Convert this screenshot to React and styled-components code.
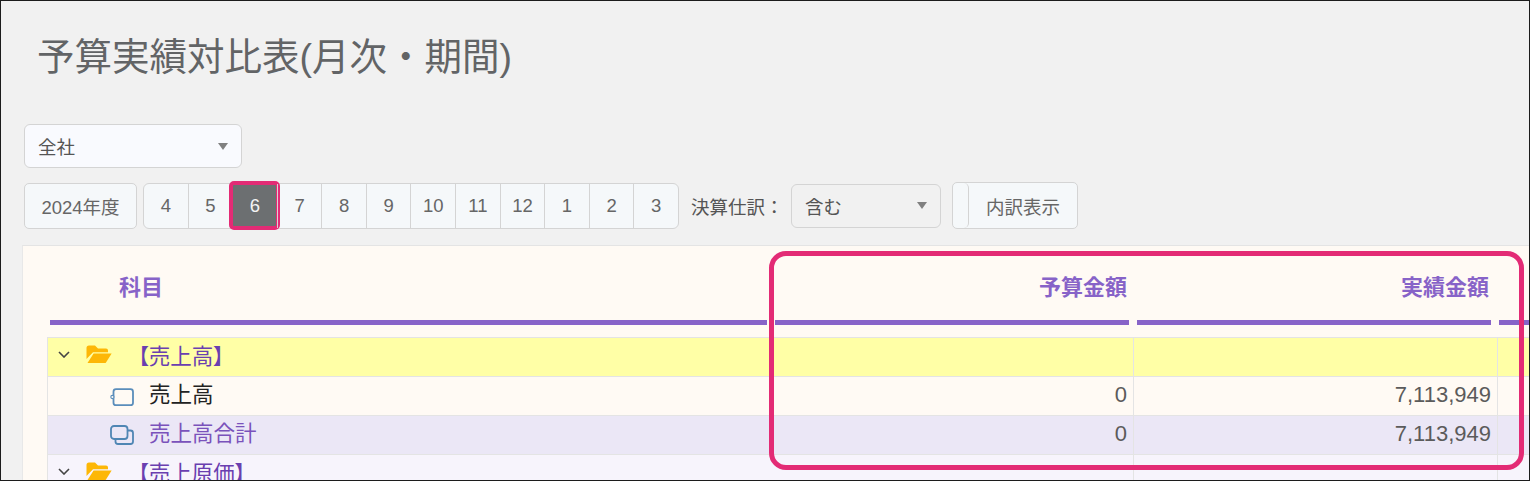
import React from "react";
import styled, { createGlobalStyle } from "styled-components";

const FONT = `"Liberation Sans", "Noto Sans CJK JP", sans-serif`;
const MONTHS = [4, 5, 6, 7, 8, 9, 10, 11, 12, 1, 2, 3];

const GlobalStyle = createGlobalStyle`
  html, body {
    margin: 0;
    padding: 0;
    background: #f1f1f1;
  }
`;

const Page = styled.div`
  position: relative;
  box-sizing: border-box;
  width: 1530px;
  height: 481px;
  overflow: hidden;
  border: 1px solid #1c1c1c;
  background: #f1f1f1;
  padding: 0 0 0 21px;
  font-family: ${FONT};
  color: #555;
`;

const Title = styled.h1`
  margin: 0;
  padding: 34px 0 0 15px;
  height: 123px;
  box-sizing: border-box;
  font-size: 37.5px;
  line-height: 44px;
  font-weight: 400;
  color: #626466;
`;

const CompanySelect = styled.div`
  box-sizing: border-box;
  display: flex;
  align-items: center;
  justify-content: space-between;
  width: 218px;
  height: 44px;
  margin-left: 2px;
  padding: 0 13px;
  border: 1px solid #d4d4d4;
  border-radius: 6px;
  background: #f9fafe;
  font-size: 18.5px;
  color: #555;
`;

const ClosingSelect = styled(CompanySelect)`
  width: 150px;
  margin-left: 0;
  background: #f1f1f1;
`;

const Caret = styled.span`
  width: 0;
  height: 0;
  border-left: 5.5px solid transparent;
  border-right: 5.5px solid transparent;
  border-top: 7px solid #808080;
`;

const Controls = styled.div`
  display: flex;
  align-items: center;
  margin: 14px 0 16px 2px;
  height: 47px;
`;

const Plain = styled.div`
  box-sizing: border-box;
  display: flex;
  align-items: center;
  justify-content: center;
  width: 113px;
  height: 46px;
  margin-right: 6px;
  border: 1px solid #d4d4d4;
  border-radius: 5px;
  background: #f5f8fa;
  font-size: 18.5px;
  color: #666;
`;

const Months = styled.div`
  box-sizing: border-box;
  display: flex;
  width: 536px;
  height: 46px;
  border: 1px solid #d4d4d4;
  border-radius: 6px;
  background: #f5f8fa;
`;

const Month = styled.div`
  position: relative;
  flex: 1;
  display: flex;
  align-items: center;
  justify-content: center;
  font-size: 18.5px;
  color: ${(p) => (p.$active ? "#f4f4f4" : "#666")};
  background: ${(p) => (p.$active ? "#6c6f71" : "transparent")};
  border-left: ${(p) => (p.$first ? "0" : "1px solid #d4d4d4")};

  ${(p) =>
    p.$active &&
    `&::after {
      content: "";
      position: absolute;
      top: -3px;
      bottom: -2px;
      left: -4px;
      right: -3px;
      border: 4px solid #e32b75;
      border-radius: 5px;
    }`}
`;

const FieldLabel = styled.span`
  box-sizing: border-box;
  width: 112px;
  padding-left: 12px;
  font-size: 18.5px;
  white-space: nowrap;
  color: #555;
`;

const Split = styled.div`
  box-sizing: border-box;
  display: flex;
  width: 126px;
  height: 47px;
  margin-left: 11px;
  border: 1px solid #d4d4d4;
  border-radius: 5px;
  background: #f5f8fa;
`;

const SplitEdge = styled.div`
  width: 15px;
  border-right: 1px solid #d4d4d4;
  border-radius: 0 5px 5px 0;
`;

const SplitLabel = styled.div`
  flex: 1;
  display: flex;
  align-items: center;
  justify-content: center;
  font-size: 18.5px;
  color: #666;
`;

const Panel = styled.div`
  width: 1520px;
  height: 300px;
  border-top: 1px solid #e4e4e4;
  border-left: 1px solid #e8e8e8;
  background: #fffaf4;
  padding-left: 24px;
`;

const HeadRow = styled.div`
  display: grid;
  grid-template-columns: 717px 354px 354px 354px;
  column-gap: 8px;
  margin-left: 3px;
  height: 79px;
`;

const HeadCell = styled.div`
  box-sizing: border-box;
  height: 79px;
  border-bottom: 5px solid #8763c8;
  padding: 28px ${(p) => (p.$right ? "2px" : "0")} 0 ${(p) => (p.$right ? "0" : "69px")};
  text-align: ${(p) => (p.$right ? "right" : "left")};
  font-size: 22px;
  line-height: 28px;
  font-weight: 700;
  color: #8763c8;
`;

const Body = styled.div`
  margin-top: 12px;
  border-top: 1px solid #e4e4e4;
  border-left: 1px solid #e4e4e4;
  width: 1500px;
`;

const Row = styled.div`
  display: grid;
  grid-template-columns: 724px 362px 364px 362px;
  height: 39px;
  box-sizing: border-box;
  border-bottom: 1px solid #e4e4e4;
  background: ${(p) => p.$bg};
`;

const NameCell = styled.div`
  display: flex;
  align-items: center;
  padding-left: 62px;
  padding-bottom: 7px;
  font-size: 21.5px;
  white-space: nowrap;
  color: ${(p) => p.$color};
`;

const GroupCell = styled(NameCell)`
  padding-left: 10px;
  padding-bottom: 5px;
  font-feature-settings: "palt";
`;

const Amount = styled.div`
  box-sizing: border-box;
  display: flex;
  align-items: center;
  justify-content: flex-end;
  padding-right: 6px;
  padding-bottom: 3px;
  border-right: 1px solid ${(p) => (p.$noLine ? "transparent" : "#e4e4e4")};
  font-size: 22px;
  color: #5b5b5b;
`;

const Chevron = styled.svg`
  width: 12px;
  height: 7px;
  margin-right: 16px;
`;

const Folder = styled.svg`
  width: 26px;
  height: 19px;
  margin-right: 26px;
`;

const LeafIcon = styled.svg`
  width: 24px;
  height: 22px;
  margin: 9px 15px 0 0;
`;

const Frame = styled.div`
  position: absolute;
  left: 768px;
  top: 250px;
  width: 755px;
  height: 219px;
  box-sizing: border-box;
  border: 5px solid #e32b75;
  border-radius: 17px;
`;

const Arrow = () => (
  <Chevron viewBox="0 0 12 7">
    <path d="M1 1l5 5 5-5" fill="none" stroke="#444" strokeWidth="1.6" />
  </Chevron>
);

const FolderOpen = () => (
  <Folder viewBox="0 0 26 19">
    <path d="M.5 3A2.5 2.5 0 0 1 3 .5h6l3 3h8a2 2 0 0 1 2 2v1.7H7L.5 14z" fill="#fdb706" />
    <path d="M7.6 8.6h18L20 17.4a1.5 1.5 0 0 1-1 .6H1.5z" fill="#fdb706" />
  </Folder>
);

const SingleIcon = () => (
  <LeafIcon viewBox="0 0 24 22">
    <rect x="3.5" y="3.2" width="19.5" height="16" rx="2.5" fill="none" stroke="#5a8dbb" strokeWidth="1.8" />
    <circle cx="2.4" cy="11" r="1.6" fill="#fffaf4" stroke="#5a8dbb" strokeWidth="1.1" />
  </LeafIcon>
);

const DoubleIcon = () => (
  <LeafIcon viewBox="0 0 24 22">
    <rect x="5.5" y="5.5" width="17.5" height="13.5" rx="2.5" fill="none" stroke="#4f86b4" strokeWidth="1.8" />
    <rect x="1" y="1" width="16.5" height="13" rx="3" fill="#ebe7f6" stroke="#4f86b4" strokeWidth="1.8" />
  </LeafIcon>
);

const Amounts = ({ budget, actual }) => (
  <>
    <Amount>{budget}</Amount>
    <Amount>{actual}</Amount>
    <Amount $noLine />
  </>
);

export default function App() {
  return (
    <Page>
      <GlobalStyle />
      <Title>予算実績対比表(月次・期間)</Title>
      <CompanySelect>
        全社
        <Caret />
      </CompanySelect>
      <Controls>
        <Plain>2024年度</Plain>
        <Months>
          {MONTHS.map((m, i) => (
            <Month key={m} $first={i === 0} $active={m === 6}>
              {m}
            </Month>
          ))}
        </Months>
        <FieldLabel>決算仕訳：</FieldLabel>
        <ClosingSelect>
          含む
          <Caret />
        </ClosingSelect>
        <Split>
          <SplitEdge />
          <SplitLabel>内訳表示</SplitLabel>
        </Split>
      </Controls>
      <Panel>
        <HeadRow>
          <HeadCell>科目</HeadCell>
          <HeadCell $right>予算金額</HeadCell>
          <HeadCell $right>実績金額</HeadCell>
          <HeadCell />
        </HeadRow>
        <Body>
          <Row $bg="#ffffa6">
            <GroupCell $color="#6a3fb0">
              <Arrow />
              <FolderOpen />
              【売上高】
            </GroupCell>
            <Amounts />
          </Row>
          <Row $bg="#fffaf4">
            <NameCell $color="#222">
              <SingleIcon />
              売上高
            </NameCell>
            <Amounts budget="0" actual="7,113,949" />
          </Row>
          <Row $bg="#ebe7f6">
            <NameCell $color="#7a52bb">
              <DoubleIcon />
              売上高合計
            </NameCell>
            <Amounts budget="0" actual="7,113,949" />
          </Row>
          <Row $bg="#f7f4fc">
            <GroupCell $color="#6a3fb0">
              <Arrow />
              <FolderOpen />
              【売上原価】
            </GroupCell>
            <Amounts />
          </Row>
        </Body>
      </Panel>
      <Frame />
    </Page>
  );
}
